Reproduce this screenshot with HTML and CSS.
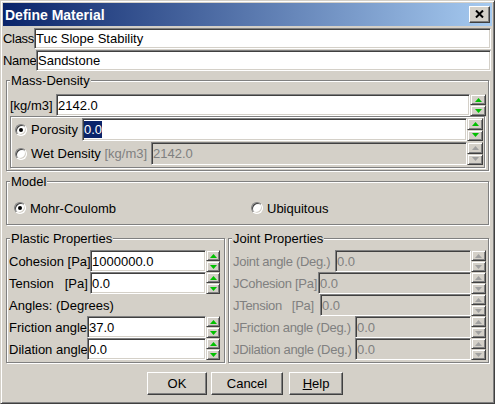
FILE: index.html
```html
<!DOCTYPE html>
<html>
<head>
<meta charset="utf-8">
<title>Define Material</title>
<link rel="stylesheet" href="styles.css">
</head>
<body>
<div class="win">
  <div class="titlebar">
    <span class="title">Define Material</span>
    <div class="close"><svg width="9" height="8" viewBox="0 0 9 8"><path d="M1 0.5 L8 7.5 M8 0.5 L1 7.5" stroke="#000" stroke-width="2" fill="none"/></svg></div>
  </div>
  <div class="content">
    <div class="row r-top"><span class="lbl jl w-class">Class</span><div class="field">Tuc Slope Stability</div></div>
    <div class="row r-top r-name"><span class="lbl jl w-name">Name</span><div class="field">Sandstone</div></div>

    <div class="group g-mass">
      <div class="legend">Mass-Density</div>
      <div class="row r-kg">
        <span class="lbl w-kg">[kg/m3]</span>
        <div class="field">2142.0</div>
        <div class="spin"><div class="sb"><svg width="7" height="4" viewBox="0 0 7 4"><polygon points="3.5,0 7,4 0,4" class="ar"/></svg></div><div class="sb"><svg width="7" height="4" viewBox="0 0 7 4"><polygon points="0,0 7,0 3.5,4" class="ar"/></svg></div></div>
      </div>
      <div class="inner">
        <div class="row r-por">
          <span class="radio on"></span>
          <span class="lbl w-por">Porosity</span>
          <div class="field"><span class="sel">0.0</span></div>
          <div class="spin"><div class="sb"><svg width="7" height="4" viewBox="0 0 7 4"><polygon points="3.5,0 7,4 0,4" class="ar"/></svg></div><div class="sb"><svg width="7" height="4" viewBox="0 0 7 4"><polygon points="0,0 7,0 3.5,4" class="ar"/></svg></div></div>
        </div>
        <div class="row r-wet">
          <span class="radio"></span>
          <span class="lbl w-wet">Wet Density <span class="dis">[kg/m3]</span></span>
          <div class="field off">2142.0</div>
          <div class="spin"><div class="sb"><svg width="7" height="4" viewBox="0 0 7 4"><polygon points="3.5,0 7,4 0,4" class="ar off"/></svg></div><div class="sb"><svg width="7" height="4" viewBox="0 0 7 4"><polygon points="0,0 7,0 3.5,4" class="ar off"/></svg></div></div>
        </div>
      </div>
    </div>

    <div class="group g-model">
      <div class="legend">Model</div>
      <div class="model-row">
        <div class="opt"><span class="radio on"></span><span class="opt-l">Mohr-Coulomb</span></div>
        <div class="opt"><span class="radio"></span><span class="opt-l">Ubiquitous</span></div>
      </div>
    </div>

    <div class="split">
      <div class="group g-plastic">
        <div class="legend">Plastic Properties</div>
        <div class="rows">
          <div class="row r-p"><span class="lbl w-p1">Cohesion [Pa]</span><div class="field">1000000.0</div>
            <div class="spin sp-s"><div class="sb"><svg width="7" height="4" viewBox="0 0 7 4"><polygon points="3.5,0 7,4 0,4" class="ar"/></svg></div><div class="sb"><svg width="7" height="4" viewBox="0 0 7 4"><polygon points="0,0 7,0 3.5,4" class="ar"/></svg></div></div></div>
          <div class="row r-p"><span class="lbl w-p1">Tension   [Pa]</span><div class="field">0.0</div>
            <div class="spin sp-s"><div class="sb"><svg width="7" height="4" viewBox="0 0 7 4"><polygon points="3.5,0 7,4 0,4" class="ar"/></svg></div><div class="sb"><svg width="7" height="4" viewBox="0 0 7 4"><polygon points="0,0 7,0 3.5,4" class="ar"/></svg></div></div></div>
          <div class="row r-p"><span class="lbl">Angles: (Degrees)</span></div>
          <div class="row r-p"><span class="lbl w-p2">Friction angle</span><div class="field">37.0</div>
            <div class="spin sp-s"><div class="sb"><svg width="7" height="4" viewBox="0 0 7 4"><polygon points="3.5,0 7,4 0,4" class="ar"/></svg></div><div class="sb"><svg width="7" height="4" viewBox="0 0 7 4"><polygon points="0,0 7,0 3.5,4" class="ar"/></svg></div></div></div>
          <div class="row r-p"><span class="lbl w-p2">Dilation angle</span><div class="field">0.0</div>
            <div class="spin sp-s"><div class="sb"><svg width="7" height="4" viewBox="0 0 7 4"><polygon points="3.5,0 7,4 0,4" class="ar"/></svg></div><div class="sb"><svg width="7" height="4" viewBox="0 0 7 4"><polygon points="0,0 7,0 3.5,4" class="ar"/></svg></div></div></div>
        </div>
      </div>

      <div class="group g-joint">
        <div class="legend">Joint Properties</div>
        <div class="rows">
          <div class="row r-p"><span class="lbl dis jl w-j1">Joint angle (Deg.)</span><div class="field off">0.0</div>
            <div class="spin sp-j"><div class="sb"><svg width="7" height="4" viewBox="0 0 7 4"><polygon points="3.5,0 7,4 0,4" class="ar off"/></svg></div><div class="sb"><svg width="7" height="4" viewBox="0 0 7 4"><polygon points="0,0 7,0 3.5,4" class="ar off"/></svg></div></div></div>
          <div class="row r-p"><span class="lbl dis jl w-j2">JCohesion [Pa]</span><div class="field off">0.0</div>
            <div class="spin sp-j"><div class="sb"><svg width="7" height="4" viewBox="0 0 7 4"><polygon points="3.5,0 7,4 0,4" class="ar off"/></svg></div><div class="sb"><svg width="7" height="4" viewBox="0 0 7 4"><polygon points="0,0 7,0 3.5,4" class="ar off"/></svg></div></div></div>
          <div class="row r-p"><span class="lbl dis jl w-j3">JTension   [Pa]</span><div class="field off">0.0</div>
            <div class="spin sp-j"><div class="sb"><svg width="7" height="4" viewBox="0 0 7 4"><polygon points="3.5,0 7,4 0,4" class="ar off"/></svg></div><div class="sb"><svg width="7" height="4" viewBox="0 0 7 4"><polygon points="0,0 7,0 3.5,4" class="ar off"/></svg></div></div></div>
          <div class="row r-p"><span class="lbl dis jl w-j4">JFriction angle (Deg.)</span><div class="field off">0.0</div>
            <div class="spin sp-j"><div class="sb"><svg width="7" height="4" viewBox="0 0 7 4"><polygon points="3.5,0 7,4 0,4" class="ar off"/></svg></div><div class="sb"><svg width="7" height="4" viewBox="0 0 7 4"><polygon points="0,0 7,0 3.5,4" class="ar off"/></svg></div></div></div>
          <div class="row r-p"><span class="lbl dis jl w-j4">JDilation angle (Deg.)</span><div class="field off">0.0</div>
            <div class="spin sp-j"><div class="sb"><svg width="7" height="4" viewBox="0 0 7 4"><polygon points="3.5,0 7,4 0,4" class="ar off"/></svg></div><div class="sb"><svg width="7" height="4" viewBox="0 0 7 4"><polygon points="0,0 7,0 3.5,4" class="ar off"/></svg></div></div></div>
        </div>
      </div>
    </div>

    <div class="buttons">
      <div class="btn b-ok">OK</div>
      <div class="btn b-cancel">Cancel</div>
      <div class="btn b-help"><u>H</u>elp</div>
    </div>
  </div>
</div>
</body>
</html>
```

FILE: styles.css
```css
* { box-sizing: border-box; }
html, body { margin: 0; padding: 0; }
body {
  font-family: "Liberation Sans", Arial, sans-serif;
  font-size: 13px;
  color: #000;
  background: #fff;
}

.win {
  width: 495px;
  height: 404px;
  background: #d4d0c8;
  border: 1px solid;
  border-color: #d4d0c8 #404040 #404040 #d4d0c8;
  box-shadow: inset 1px 1px #fff, inset -1px -1px #808080;
  padding: 2px;
  display: flex;
  flex-direction: column;
}

.titlebar {
  height: 23px;
  flex: none;
  display: flex;
  align-items: center;
  padding-left: 2px;
  background: linear-gradient(to right, #0a246a, #a6caf0);
}
.title {
  color: #fff;
  font-weight: bold;
  font-size: 14px;
}
.close {
  margin-left: auto;
  margin-right: 2px;
  width: 21px;
  height: 17px;
  background: #d4d0c8;
  border: 1px solid;
  border-color: #fff #404040 #404040 #fff;
  box-shadow: inset -1px -1px #808080;
  display: flex;
  align-items: center;
  justify-content: center;
}
.close svg { display: block; margin-top: -1px; }

.content {
  flex: 1;
  display: flex;
  flex-direction: column;
  padding: 2px 1px 0 0;
}

.row { display: flex; align-items: center; flex: none; }
.lbl { white-space: pre; flex: none; }
.dis { color: #808080; }
.jl { letter-spacing: -0.3px; }

.field {
  flex: 1;
  min-width: 0;
  align-self: stretch;
  background: #fff;
  border: 1px solid;
  border-color: #808080 #fff #fff #808080;
  box-shadow: inset 1px 1px #404040, inset -1px -1px #d4d0c8;
  padding-left: 1px;
  display: flex;
  align-items: center;
  white-space: pre;
  overflow: hidden;
}
.field.off { background: #d4d0c8; color: #808080; }
.sel { background: #0a246a; color: #fff; padding: 1px 0; }

.r-top { height: 21px; }
.r-name { margin-top: 1px; }
.w-class { width: 31px; }
.w-name { width: 33px; }

/* group boxes (etched border) */
.group {
  border: 1px solid #808080;
  box-shadow: inset 1px 1px #fff, 1px 1px #fff;
  display: flex;
  flex-direction: column;
  flex: none;
}
.legend {
  align-self: flex-start;
  margin: -8px 0 0 3px;
  padding: 0 1px;
  height: 15px;
  line-height: 15px;
  background: #d4d0c8;
  white-space: nowrap;
}

.g-mass { margin: 9px 2px 0 3px; padding: 0 2px 0 0; }
.r-kg { height: 22px; margin: 6px 0 0 3px; }
.w-kg { width: 46px; }

.inner {
  margin: 0 1px 2px 3px;
  border: 1px solid #808080;
  box-shadow: inset 1px 1px #fff, 1px 1px #fff;
  padding: 1px 1px 2px 4px;
}
.r-por { height: 23px; margin-bottom: 1px; }
.r-wet { height: 23px; }
.w-por { width: 51px; margin-left: 4px; }
.w-wet { width: 120px; margin-left: 4px; }

.radio {
  flex: none;
  position: relative;
  width: 12px;
  height: 12px;
  border-radius: 50%;
  background: #fff;
  border: 1px solid;
  border-color: #808080 #fff #fff #808080;
  box-shadow: inset 1px 1px #404040, inset -1px -1px #d4d0c8;
}
.radio.on::after {
  content: "";
  position: absolute;
  left: 3px;
  top: 3px;
  width: 4px;
  height: 4px;
  border-radius: 50%;
  background: #000;
}

/* spinner */
.spin {
  flex: none;
  width: 16px;
  align-self: stretch;
  display: flex;
  flex-direction: column;
}
.sp-s { width: 14px; }
.sp-j { width: 15px; }
.sb {
  flex: 1;
  background: #d4d0c8;
  border: 1px solid;
  border-color: #d4d0c8 #404040 #404040 #d4d0c8;
  box-shadow: inset 1px 1px #fff, inset -1px -1px #808080;
  display: flex;
  align-items: center;
  justify-content: center;
}
.sb svg { display: block; }
.ar { fill: #00c000; }
.ar.off { fill: #a0a0a0; }

/* model */
.g-model { margin: 10px 2px 0 3px; }
.model-row {
  display: grid;
  grid-template-columns: 1fr 1fr;
  height: 16px;
  margin: 11px 0 8px 7px;
}
.opt { display: flex; align-items: center; }
.opt-l { margin-left: 4px; }

/* plastic / joint */
.split {
  display: flex;
  margin: 13px 2px 0 3px;
  gap: 3px;
  flex: none;
}
.g-plastic { width: 219px; padding: 0 4px 2px 2px; }
.g-joint { flex: 1; padding: 0 2px 2px 4px; }
.g-plastic .legend { margin-left: 1px; }
.g-joint .legend { margin-left: -1px; }
.rows { margin-top: 4px; display: flex; flex-direction: column; }
.r-p { height: 22px; }
.w-p1 { width: 81px; }
.w-p2 { width: 78px; }
.w-j1 { width: 102px; }
.w-j2 { width: 85px; }
.w-j3 { width: 87px; }
.w-j4 { width: 122px; }

/* buttons */
.buttons {
  display: flex;
  justify-content: center;
  margin-top: 9px;
  padding-right: 4px;
  gap: 4px;
}
.btn {
  height: 23px;
  background: #d4d0c8;
  border: 1px solid;
  border-color: #fff #404040 #404040 #fff;
  box-shadow: inset -1px -1px #808080;
  display: flex;
  align-items: center;
  justify-content: center;
}
.b-ok { width: 60px; }
.b-cancel { width: 72px; }
.b-help { width: 54px; margin-left: 2px; }
```
